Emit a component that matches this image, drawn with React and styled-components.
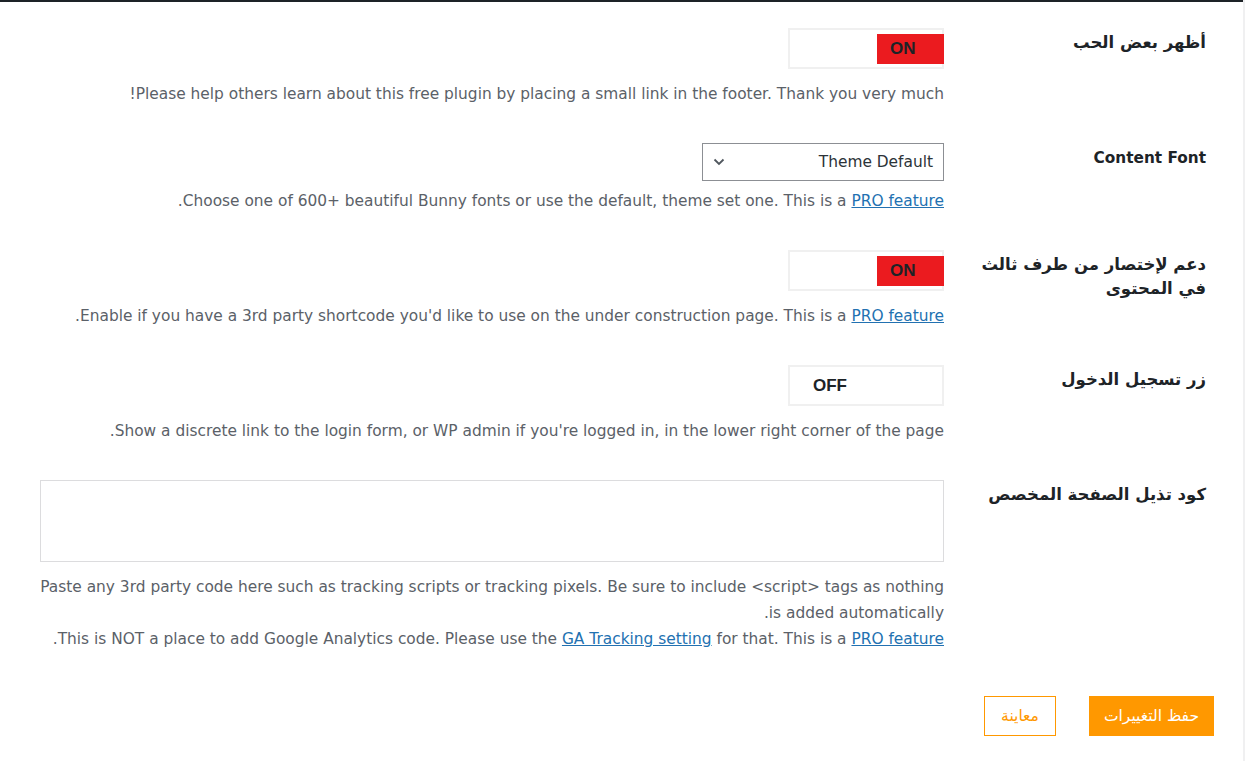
import React from 'react'
import styled, { createGlobalStyle } from 'styled-components'

const GlobalStyle = createGlobalStyle`
   html, body {
      margin: 0;
      padding: 0;
      background: #ffffff;
   }
   body {
      font-family: "DejaVu Sans", sans-serif;
   }
`

function Toggle({ on }) {
   return (
      <SwitchBox>
         <Knob on={on ? 1 : 0}>{on ? 'ON' : 'OFF'}</Knob>
      </SwitchBox>
   )
}

function FontSelect({ value }) {
   return (
      <SelectBox>
         <span>{value}</span>
         <svg width="12" height="8" viewBox="0 0 12 8">
            <path d="M1.5 1.5 L6 6 L10.5 1.5" fill="none" stroke="#50575e" strokeWidth="1.8" />
         </svg>
      </SelectBox>
   )
}

function App() {
   return (
      <Page>
         <GlobalStyle />
         <TopBar />
         <Form>
            <Row>
               <Label>أظهر بعض الحب</Label>
               <Field>
                  <Toggle on />
                  <Desc>Please help others learn about this free plugin by placing a small link in the footer. Thank you very much!</Desc>
               </Field>
            </Row>

            <Row>
               <Label latin>Content Font</Label>
               <Field>
                  <FontSelect value="Theme Default" />
                  <Desc tight>
                     Choose one of 600+ beautiful Bunny fonts or use the default, theme set one. This is a <Link href="#">PRO feature</Link>.
                  </Desc>
               </Field>
            </Row>

            <Row>
               <Label>دعم لإختصار من طرف ثالث في المحتوى</Label>
               <Field>
                  <Toggle on />
                  <Desc>
                     Enable if you have a 3rd party shortcode you'd like to use on the under construction page. This is a <Link href="#">PRO feature</Link>.
                  </Desc>
               </Field>
            </Row>

            <Row>
               <Label>زر تسجيل الدخول</Label>
               <Field>
                  <Toggle />
                  <Desc>Show a discrete link to the login form, or WP admin if you're logged in, in the lower right corner of the page.</Desc>
               </Field>
            </Row>

            <Row>
               <Label>كود تذيل الصفحة المخصص</Label>
               <Field>
                  <CodeArea />
                  <Desc>
                     Paste any 3rd party code here such as tracking scripts or tracking pixels. Be sure to include &lt;script&gt; tags as nothing<br />
                     is added automatically.<br />
                     This is NOT a place to add Google Analytics code. Please use the <Link href="#">GA Tracking setting</Link> for that. This is a <Link href="#">PRO feature</Link>.
                  </Desc>
               </Field>
            </Row>
         </Form>

         <Actions>
            <SaveButton>حفظ التغييرات</SaveButton>
            <PreviewButton>معاينة</PreviewButton>
         </Actions>
      </Page>
   )
}

const Page = styled.div`
   direction: rtl;
   width: 1245px;
   height: 761px;
   box-sizing: border-box;
   border-right: 2px solid #f0f0f1;
   overflow: hidden;
`

const TopBar = styled.div`
   height: 2px;
   background: #1d2327;
   margin-right: -2px;
`

const Form = styled.div`
   display: flex;
   flex-direction: column;
   gap: 36px;
   padding: 26px 37px 0 40px;
`

const Row = styled.div`
   display: grid;
   grid-template-columns: 242px 1fr;
   column-gap: 20px;
   align-items: start;
`

const Label = styled.div`
   padding-top: 3px;
   font-size: ${p => (p.latin ? '15.3px' : '16.5px')};
   line-height: 24px;
   font-weight: bold;
   color: #1d2327;
`

const Field = styled.div`
   display: flex;
   flex-direction: column;
   align-items: flex-start;
`

const SwitchBox = styled.div`
   direction: ltr;
   width: 156px;
   height: 41px;
   box-sizing: border-box;
   border: 2px solid #f0f0f0;
   display: flex;
   align-items: center;
`

const Knob = styled.div`
   height: 30px;
   width: ${p => (p.on ? '67px' : '60px')};
   margin-left: ${p => (p.on ? 'auto' : '23px')};
   margin-right: ${p => (p.on ? '-2px' : '0')};
   background: ${p => (p.on ? '#eb1b1f' : 'transparent')};
   color: #1d2327;
   font-weight: bold;
   font-size: 17px;
   line-height: 30px;
   font-family: "Liberation Sans", sans-serif;
   box-sizing: border-box;
   padding-left: ${p => (p.on ? '13px' : '0')};
`

const SelectBox = styled.div`
   width: 242px;
   height: 38px;
   box-sizing: border-box;
   border: 1px solid #8c8f94;
   display: flex;
   align-items: center;
   justify-content: space-between;
   padding: 0 10px 0 10px;
   font-size: 15.4px;
   color: #2c3338;
`

const CodeArea = styled.textarea`
   width: 100%;
   height: 82px;
   box-sizing: border-box;
   border: 1px solid #dcdcde;
   border-radius: 0;
   resize: none;
   outline: none;
   display: block;
   margin: 0;
`

const Desc = styled.p`
   margin: ${p => (p.tight ? '7px' : '12px')} 0 0;
   font-size: 15.4px;
   line-height: 26px;
   color: #5b6168;
`

const Link = styled.a`
   color: #2271b1;
   text-decoration: underline;
`

const Actions = styled.div`
   display: flex;
   gap: 33px;
   padding: 44px 29px 0 0;
`

const SaveButton = styled.div`
   width: 125px;
   height: 40px;
   background: #ff9800;
   color: #ffffff;
   display: flex;
   align-items: center;
   justify-content: center;
   font-size: 15.5px;
`

const PreviewButton = styled.div`
   width: 72px;
   height: 40px;
   box-sizing: border-box;
   border: 1px solid #ff9800;
   color: #ff9800;
   display: flex;
   align-items: center;
   justify-content: center;
   font-size: 15.5px;
`

export default App
